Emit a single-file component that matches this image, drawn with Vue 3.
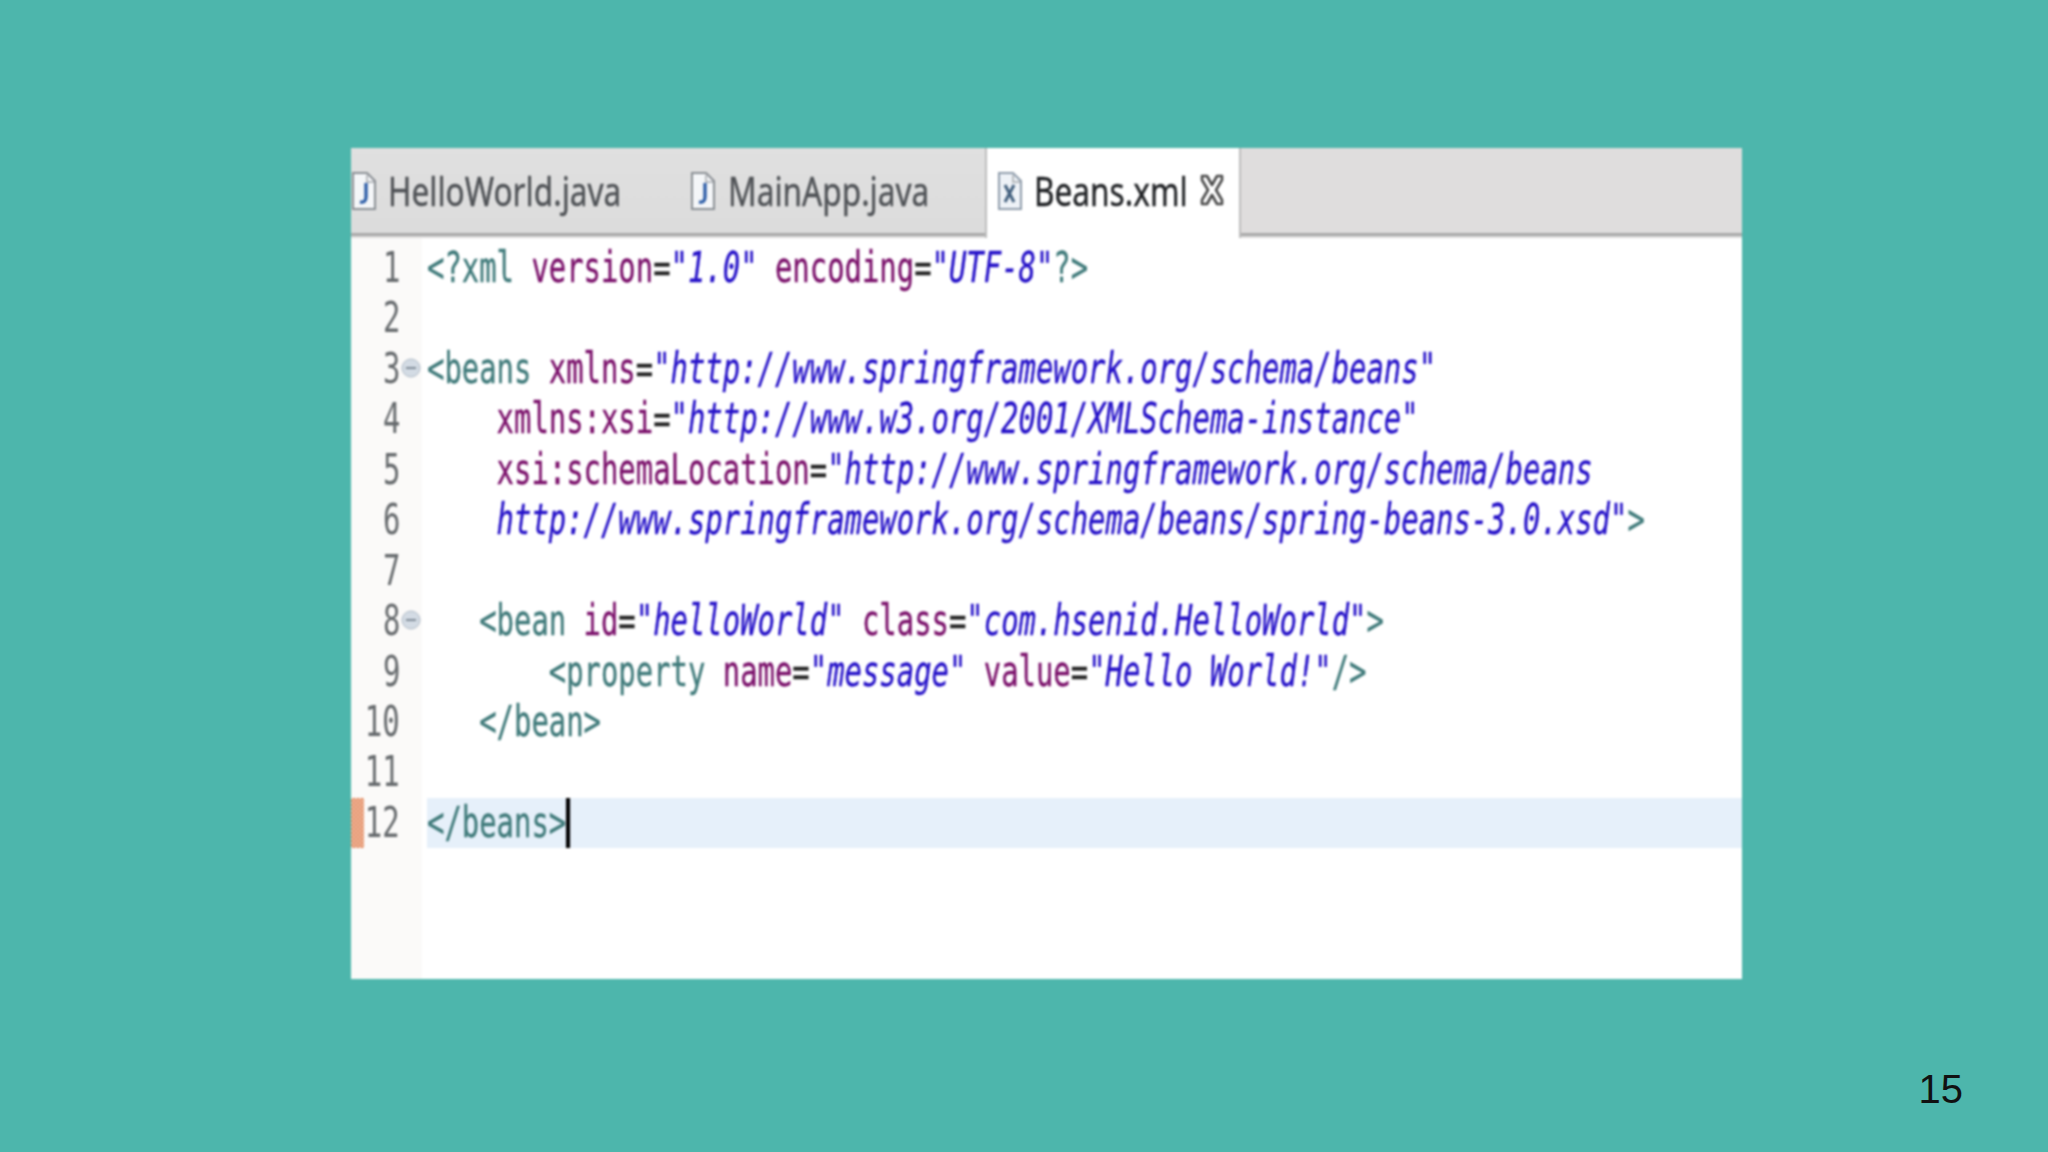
<script setup>
const T = 'tag', A = 'attr', S = 'str', P = 'plain'
const lines = [
  { n: 1, t: [[T, '<?xml '], [A, 'version'], [P, '='], [S, '"1.0"'], [P, ' '], [A, 'encoding'], [P, '='], [S, '"UTF-8"'], [T, '?>']] },
  { n: 2, t: [] },
  { n: 3, fold: true, t: [[T, '<beans '], [A, 'xmlns'], [P, '='], [S, '"http://www.springframework.org/schema/beans"']] },
  { n: 4, t: [[P, '    '], [A, 'xmlns:xsi'], [P, '='], [S, '"http://www.w3.org/2001/XMLSchema-instance"']] },
  { n: 5, t: [[P, '    '], [A, 'xsi:schemaLocation'], [P, '='], [S, '"http://www.springframework.org/schema/beans']] },
  { n: 6, t: [[P, '    '], [S, 'http://www.springframework.org/schema/beans/spring-beans-3.0.xsd"'], [T, '>']] },
  { n: 7, t: [] },
  { n: 8, fold: true, t: [[P, '   '], [T, '<bean '], [A, 'id'], [P, '='], [S, '"helloWorld"'], [P, ' '], [A, 'class'], [P, '='], [S, '"com.hsenid.HelloWorld"'], [T, '>']] },
  { n: 9, t: [[P, '       '], [T, '<property '], [A, 'name'], [P, '='], [S, '"message"'], [P, ' '], [A, 'value'], [P, '='], [S, '"Hello World!"'], [T, '/>']] },
  { n: 10, t: [[P, '   '], [T, '</bean>']] },
  { n: 11, t: [] },
  { n: 12, current: true, t: [[T, '</beans>']] },
]
</script>

<template>
  <div class="slide">
    <main class="editor">
      <nav class="tabs">
        <div class="tab tab-hello">
          <svg class="file" viewBox="0 0 26 40" width="26" height="40"><path d="M2 2h14l8 8v28H2z" fill="#f4f6f8" stroke="#8a8f94" stroke-width="2"/><path d="M16 4v7h7" fill="none" stroke="#a5a9ad" stroke-width="1.5"/><path d="M15 12v14q0 6-6 5" fill="none" stroke="#2f5fa8" stroke-width="3.4"/></svg>
          <span class="label">HelloWorld.java</span>
        </div>
        <div class="tab tab-main">
          <svg class="file" viewBox="0 0 26 40" width="26" height="40"><path d="M2 2h14l8 8v28H2z" fill="#f4f6f8" stroke="#8a8f94" stroke-width="2"/><path d="M16 4v7h7" fill="none" stroke="#a5a9ad" stroke-width="1.5"/><path d="M15 12v14q0 6-6 5" fill="none" stroke="#2f5fa8" stroke-width="3.4"/></svg>
          <span class="label">MainApp.java</span>
        </div>
        <div class="tab tab-beans">
          <svg class="file" viewBox="0 0 26 40" width="26" height="40"><path d="M2 2h14l8 8v28H2z" fill="#eef2f7" stroke="#8f9cab" stroke-width="2"/><path d="M16 4v7h7" fill="none" stroke="#a5a9ad" stroke-width="1.5"/><path d="M8 14l9 17M17 14L8 31" fill="none" stroke="#44617f" stroke-width="3"/></svg>
          <span class="label label-active">Beans.xml</span>
          <svg class="close" viewBox="0 0 26 34" width="26" height="34"><path d="M3 3h5l5 9 5-9h5v4l-6 10 6 10v4h-5l-5-9-5 9H3v-4l6-10L3 7z" fill="#fff" stroke="#4a4a4a" stroke-width="2.6" stroke-linejoin="round"/></svg>
        </div>
        <div class="tab-rest"></div>
      </nav>
      <section class="code">
        <div v-for="l in lines" :key="l.n" class="row" :class="{ current: l.current }">
          <div class="marker"></div>
          <div class="num"><span>{{ l.n }}</span></div>
          <div class="foldcell">
            <svg v-if="l.fold" viewBox="0 0 20 20" width="20" height="20"><circle cx="10" cy="10" r="9" fill="#d3dbe4" stroke="#b0bbc7"/><path d="M5 10h10" stroke="#76848f" stroke-width="1.8"/></svg>
          </div>
          <div class="text"><span class="inner"><span v-for="(tk, i) in l.t" :key="i" :class="tk[0]">{{ tk[1] }}</span><span v-if="l.current" class="caret"></span></span></div>
        </div>
      </section>
    </main>
    <footer class="page">15</footer>
  </div>
</template>

<style>
html, body { margin: 0; background: #4db6ac; }
</style>

<style scoped>
.slide {
  width: 2048px;
  height: 1152px;
  box-sizing: border-box;
  padding: 148px 85px 0 351px;
  background: #4db6ac;
  display: flex;
  flex-direction: column;
  overflow: hidden;
}
.editor {
  width: 1391px;
  height: 831px;
  background: #fff;
  overflow: hidden;
  filter: blur(0.8px);
  flex: none;
}
.tabs {
  display: flex;
  height: 90px;
  box-sizing: border-box;
  background: #dddcdc;
}
.tab {
  display: flex;
  align-items: center;
  flex: none;
  height: 88px;
  box-sizing: border-box;
  border-bottom: 3px solid #a9a9a9;
  background: linear-gradient(#e0e0e0, #dcdcdc);
}
.tab-hello { width: 339px; }
.tab-hello .file { margin-right: 11px; }
.tab-main { width: 295px; }
.tab-main .file { margin-right: 12px; }
.tab-beans {
  width: 256px;
  height: 90px;
  background: #fff;
  border-bottom: none;
  border-left: 2px solid #bdbdbd;
  border-right: 2px solid #bdbdbd;
  padding: 0 0 5px 10px;
}
.tab-beans .file { margin-right: 11px; }
.tab-rest {
  flex: 1;
  height: 88px;
  box-sizing: border-box;
  border-bottom: 3px solid #a9a9a9;
  background: #dfdddd;
}
.label {
  display: inline-block;
  width: 0;
  white-space: nowrap;
  font: 40px "Noto Sans", sans-serif;
  color: #4f5256;
  -webkit-text-stroke: 0.4px currentColor;
  transform: scaleX(0.79);
  transform-origin: left center;
}
.label-active { color: #1f2124; width: 153px; margin-right: 12px; }
.close { flex: none; margin-top: -2px; }
.code {
  padding-top: 5px;
  height: 741px;
  box-sizing: border-box;
  background: linear-gradient(90deg, #fbfaf9 71px, #fff 71px);
}
.row {
  display: grid;
  grid-template-columns: 13px 36px 27px 1fr;
  height: 50.45px;
}
.marker { height: 100%; }
.current .marker {
  background: repeating-conic-gradient(#e0825a 0 25%, #f3c7ac 0 50%) 0 0 / 4px 4px;
}
.num {
  display: flex;
  justify-content: flex-end;
  font: 42px/50.45px "DejaVu Sans Mono", monospace;
  color: #666a6d;
  white-space: pre;
}
.num span {
  flex: none;
  transform: scaleX(0.688);
  transform-origin: right center;
}
.foldcell {
  display: flex;
  align-items: center;
  padding-left: 1px;
  margin-top: -2px;
}
.text {
  min-width: 0;
  overflow: hidden;
}
.current .text { background: #e6f0fa; }
.inner {
  display: block;
  white-space: pre;
  font: 42px/50.45px "DejaVu Sans Mono", monospace;
  -webkit-text-stroke: 0.35px currentColor;
  transform: scaleX(0.688);
  transform-origin: left center;
}
.tag { color: #3f7a7a; }
.attr { color: #7a0f6a; }
.str { color: #2410c8; font-style: italic; }
.plain { color: #222; }
.caret {
  display: inline-block;
  width: 6px;
  height: 50px;
  background: #000;
  vertical-align: top;
}
.page {
  margin-top: 86px;
  text-align: right;
  font: 40px/1.2 "Liberation Sans", sans-serif;
  color: #111;
}
</style>
